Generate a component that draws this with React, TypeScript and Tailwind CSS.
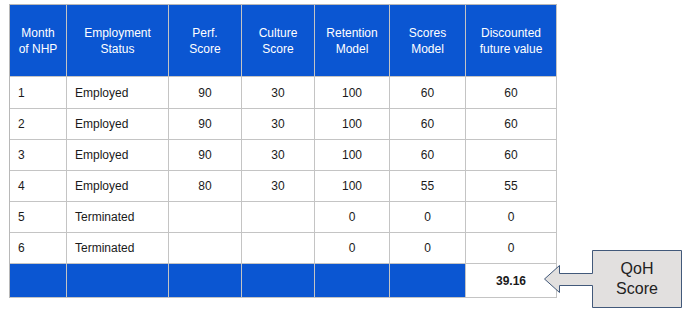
import React from 'react';

const rows = [
  ['1', 'Employed', '90', '30', '100', '60', '60'],
  ['2', 'Employed', '90', '30', '100', '60', '60'],
  ['3', 'Employed', '90', '30', '100', '60', '60'],
  ['4', 'Employed', '80', '30', '100', '55', '55'],
  ['5', 'Terminated', '', '', '0', '0', '0'],
  ['6', 'Terminated', '', '', '0', '0', '0'],
];

const headers = [
  ['Month', 'of NHP'],
  ['Employment', 'Status'],
  ['Perf.', 'Score'],
  ['Culture', 'Score'],
  ['Retention', 'Model'],
  ['Scores', 'Model'],
  ['Discounted', 'future value'],
];

const QohCallout = () => (
  <div className="absolute left-[543px] top-[249px]">
    <svg width="140" height="60" viewBox="0 0 140 60">
      <path
        d="M49.5 1.5 H138.5 V58.5 H49.5 V36.5 H16.5 V43.5 L1.5 30 L16.5 16.5 V24.5 H49.5 Z"
        fill="#e2e0df"
        stroke="#42597a"
        strokeWidth="1"
      />
    </svg>
    <div className="absolute left-[50px] top-[2px] w-[88px] h-[56px] flex flex-col items-center justify-center text-[16px] leading-[20px] text-[#222]">
      <span>QoH</span>
      <span>Score</span>
    </div>
  </div>
);

export default function App() {
  const cell = 'border-r border-b border-[#c4c4c4] flex items-center';
  return (
    <div className="relative w-[688px] h-[314px] bg-white font-['Liberation_Sans',Arial,sans-serif] text-[12px] text-[#1a1a1a]">
      <div className="pt-[4px] pl-[9px]">
        <div className="grid grid-cols-[57px_102px_73px_73px_75px_76px_91px] grid-rows-[72px_32px_31px_31px_31px_31px_31px_34px] w-[548px] border-t border-l border-[#b8b8b8]">
          {headers.map((h, i) => (
            <div key={i} className={`${cell} justify-center bg-[#0b56d2] text-white text-center leading-[16px] pt-[1px]`}>
              <div>
                {h[0]}
                <br />
                {h[1]}
              </div>
            </div>
          ))}
          {rows.map((r, ri) =>
            r.map((v, ci) => (
              <div
                key={`${ri}-${ci}`}
                className={`${cell} ${ci < 2 ? 'justify-start pl-[8px]' : 'justify-center'}`}
              >
                {v}
              </div>
            ))
          )}
          {[0, 1, 2, 3, 4, 5].map((i) => (
            <div key={i} className={`${cell} bg-[#0b56d2]`} />
          ))}
          <div className={`${cell} justify-center font-bold`}>39.16</div>
        </div>
      </div>
      <QohCallout />
    </div>
  );
}
